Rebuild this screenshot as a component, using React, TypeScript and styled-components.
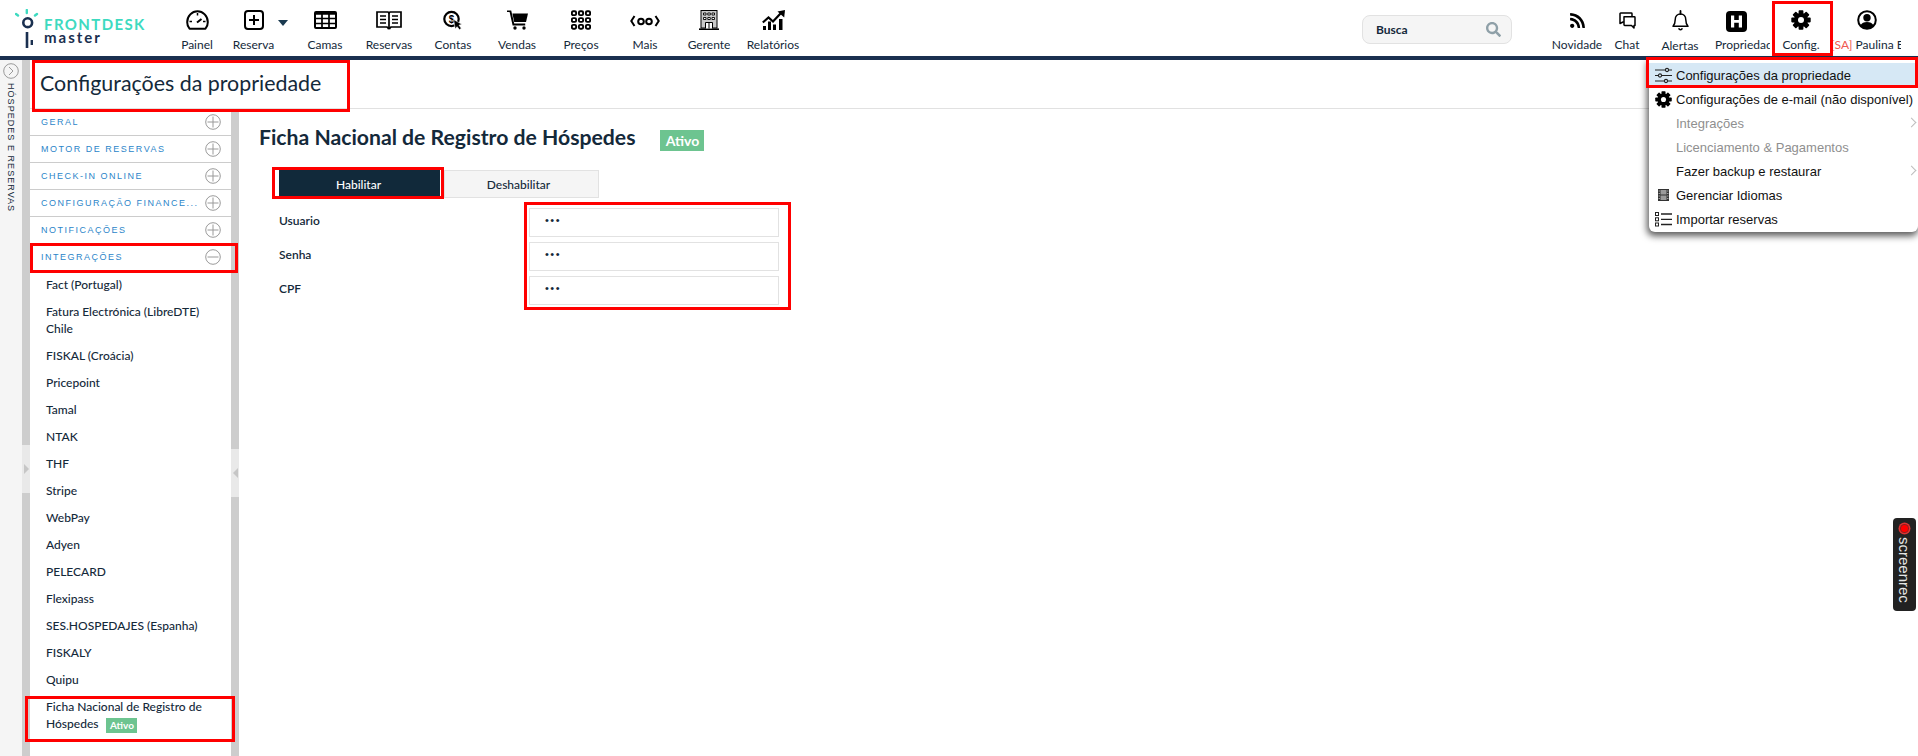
import React from "react";
import styled, { createGlobalStyle } from "styled-components";
import { FaRss, FaSearch } from "react-icons/fa";

const Global = createGlobalStyle`
  html, body { margin: 0; padding: 0; background: #fff; }
  body { font-family: "Lato", "Liberation Sans", sans-serif; color: #14293a; overflow: hidden; }
  * { box-sizing: border-box; }
`;

const Page = styled.div`
  position: relative;
  width: 1918px;
  height: 756px;
  overflow: hidden;
  display: flex;
  flex-direction: column;
`;

const Header = styled.header`
  height: 60px;
  flex: none;
  display: flex;
  align-items: flex-start;
  border-bottom: 4px solid #1a3050;
  background: #fff;
`;

const LogoBox = styled.div`
  width: 165px;
  flex: none;
  height: 56px;
  padding: 9px 0 0 15px;
`;

const NavRow = styled.nav`
  display: flex;
  flex: none;
`;

const NavItem = styled.div<{ $w?: number; $pr?: number }>`
  width: ${(p) => p.$w ?? 64}px;
  height: 56px;
  flex: none;
  padding-right: ${(p) => p.$pr ?? 0}px;
  display: flex;
  flex-direction: column;
  align-items: center;
  position: relative;
  overflow: hidden;
`;

const ClippedItem = styled(NavItem)`
  align-items: flex-start;
  padding-left: 7px;
`;

const IconSlot = styled.div<{ $pb?: number; $pr?: number }>`
  height: 37px;
  width: 100%;
  flex: none;
  display: flex;
  align-items: center;
  justify-content: center;
  color: #000;
  padding-top: ${(p) => 3 - (p.$pb ?? 0)}px;
  padding-right: ${(p) => p.$pr ?? 0}px;
`;

const NavLabel = styled.span<{ $dy?: number }>`
  font-size: 12px;
  line-height: 15px;
  white-space: nowrap;
  color: #14293a;
  margin-top: ${(p) => p.$dy ?? 0}px;
`;

const Caret = styled.span`
  position: absolute;
  left: 49px;
  top: 20px;
  width: 0;
  height: 0;
  border-left: 5px solid transparent;
  border-right: 5px solid transparent;
  border-top: 6px solid #1a3a50;
`;

const Spacer = styled.div`
  flex: 1;
`;

const SearchBox = styled.div`
  width: 150px;
  height: 29px;
  margin-top: 15px;
  margin-right: 40px;
  flex: none;
  display: flex;
  align-items: center;
  justify-content: space-between;
  padding: 0 10px 0 13px;
  background: #f5f5f5;
  border: 1px solid #e2e2e2;
  border-radius: 8px;
  font-size: 12px;
  font-weight: 700;
  color: #14293a;
  svg { color: #8fa0a8; }
`;

const UserLabel = styled.span`
  display: block;
  font-size: 12px;
  line-height: 15px;
  white-space: nowrap;
  color: #14293a;
  width: 68px;
  overflow: hidden;
  text-indent: -2px;
`;

const Red = styled.span`
  color: #f0584f;
`;

const RightNav = styled.div`
  display: flex;
  flex: none;
  padding-right: 16px;
`;

const Body = styled.div`
  flex: 1;
  display: flex;
  min-height: 0;
`;

const Rail = styled.div`
  width: 22px;
  flex: none;
  background: #f5f5f5;
  display: flex;
  flex-direction: column;
  align-items: center;
  padding-top: 3px;
`;

const RailText = styled.span`
  writing-mode: vertical-rl;
  font-family: "Liberation Sans", sans-serif;
  font-size: 9px;
  letter-spacing: 1.05px;
  margin-top: 4px;
  color: #14293a;
  white-space: nowrap;
`;

const Splitter = styled.div`
  width: 8px;
  flex: none;
  background: #cdcdcd;
  position: relative;
`;

const SplitTab = styled.div<{ $top: number; $left?: boolean }>`
  position: absolute;
  left: 0;
  top: ${(p) => p.$top}px;
  width: 8px;
  height: 48px;
  background: #e9e9e9;
  display: flex;
  align-items: center;
  justify-content: center;
  &::after {
    content: "";
    border-top: 5px solid transparent;
    border-bottom: 5px solid transparent;
    ${(p) => (p.$left ? "border-right: 5px solid #c6c6c6;" : "border-left: 5px solid #c6c6c6;")}
  }
`;

const Workspace = styled.div`
  flex: 1;
  display: flex;
  flex-direction: column;
  min-width: 0;
`;

const TitleBar = styled.div`
  height: 49px;
  flex: none;
  padding-left: 10px;
  display: flex;
  align-items: center;
  border-bottom: 1px solid #e1e1e1;
`;

const PageTitle = styled.h1`
  margin: 0;
  font-size: 21.4px;
  font-weight: 400;
  color: #14293a;
  padding-bottom: 2px;
`;

const Columns = styled.div`
  flex: 1;
  display: flex;
  min-height: 0;
`;

const Sidebar = styled.aside`
  width: 201px;
  flex: none;
  background: #fff;
`;

const SectionRow = styled.div`
  height: 27px;
  display: flex;
  align-items: center;
  justify-content: space-between;
  padding: 0 10px 0 11px;
  border-bottom: 1px solid #ccc;
`;

const SectionTitle = styled.span`
  font-family: "Liberation Sans", sans-serif;
  font-size: 9px;
  letter-spacing: 1.5px;
  color: #2b85c9;
  white-space: nowrap;
`;

const SubItem = styled.div`
  padding: 5px 18px 5px 16px;
  font-size: 12px;
  font-weight: 500;
  line-height: 17px;
  color: #14293a;
`;

const MiniBadge = styled.span`
  display: inline-block;
  margin-left: 8px;
  padding: 0 3.5px;
  height: 15px;
  line-height: 15px;
  font-size: 10px;
  font-weight: 700;
  color: #fff;
  background: #6dc490;
  vertical-align: -1px;
`;

const Main = styled.main`
  flex: 1;
  min-width: 0;
  padding: 14px 0 0 20px;
`;

const HeadingRow = styled.div`
  display: flex;
  align-items: center;
  height: 27px;
`;

const Heading = styled.h2`
  margin: 0;
  font-size: 21.2px;
  font-weight: 700;
  color: #14293a;
  white-space: nowrap;
`;

const Badge = styled.span`
  margin-left: 25px;
  margin-top: 8px;
  width: 44px;
  height: 21px;
  flex: none;
  display: flex;
  align-items: center;
  justify-content: center;
  font-size: 14px;
  font-weight: 700;
  color: #fff;
  background: #6dc490;
`;

const Toggle = styled.div`
  display: flex;
  margin: 20px 0 0 20px;
  height: 28px;
`;

const ToggleButton = styled.div<{ $on?: boolean }>`
  width: ${(p) => (p.$on ? 161 : 155)}px;
  margin-right: ${(p) => (p.$on ? 4 : 0)}px;
  padding-right: ${(p) => (p.$on ? 2 : 6)}px;
  display: flex;
  align-items: center;
  justify-content: center;
  font-size: 12px;
  color: ${(p) => (p.$on ? "#fff" : "#14293a")};
  background: ${(p) => (p.$on ? "#11293a" : "#f5f5f5")};
  border: 1px solid ${(p) => (p.$on ? "#11293a" : "#e2e2e2")};
  font-weight: 500;
`;

const Form = styled.div`
  display: grid;
  grid-template-columns: 250px 250px;
  row-gap: 5px;
  margin: 10px 0 0 20px;
`;

const FieldLabel = styled.label`
  font-size: 12px;
  font-weight: 600;
  color: #14293a;
  padding-top: 5px;
`;

const FieldBox = styled.div`
  height: 29px;
  border: 1px solid #e2e2e2;
  padding-left: 15px;
  font-family: "Liberation Sans", sans-serif;
  font-size: 11px;
  letter-spacing: 1.5px;
  line-height: 22px;
  color: #14293a;
`;

const Menu = styled.div`
  position: absolute;
  left: 1649px;
  top: 60px;
  width: 269px;
  height: 172px;
  padding-top: 3px;
  background: #fff;
  border-radius: 0 0 6px 6px;
  box-shadow: -1px 3px 7px 1px rgba(0, 0, 0, 0.65);
  font-family: "Liberation Sans", sans-serif;
`;

const MenuRow = styled.div<{ $active?: boolean; $muted?: boolean }>`
  height: 24px;
  display: flex;
  align-items: center;
  padding-left: 27px;
  position: relative;
  font-size: 13px;
  white-space: nowrap;
  background: ${(p) => (p.$active ? "#d6e8f5" : "transparent")};
  color: ${(p) => (p.$muted ? "#8f8f8f" : "#111")};
`;

const MenuIcon = styled.span`
  position: absolute;
  left: 5px;
  top: 3px;
  width: 18px;
  height: 18px;
  display: flex;
  align-items: center;
  justify-content: center;
  color: #111;
`;

const MenuChevron = styled.span`
  position: absolute;
  right: 3px;
  top: 8px;
  width: 7px;
  height: 7px;
  border-top: 1px solid #bdbdbd;
  border-right: 1px solid #bdbdbd;
  transform: rotate(45deg);
`;

const Annotation = styled.div<{ $x: number; $y: number; $w: number; $h: number }>`
  position: absolute;
  left: ${(p) => p.$x}px;
  top: ${(p) => p.$y}px;
  width: ${(p) => p.$w}px;
  height: ${(p) => p.$h}px;
  border: 3px solid #ff0000;
  pointer-events: none;
`;

const ScreenRec = styled.div`
  position: absolute;
  left: 1893px;
  top: 518px;
  width: 23px;
  height: 93px;
  border-radius: 4px;
  background: #222;
  display: flex;
  flex-direction: column;
  align-items: center;
  padding-top: 7px;
`;

const RecDot = styled.span`
  width: 7px;
  height: 7px;
  border-radius: 50%;
  background: #ff0000;
  box-shadow: 0 0 0 1px #8a1f1f, 0 0 0 2.5px #d33;
  flex: none;
`;

const RecText = styled.span`
  writing-mode: vertical-rl;
  margin-top: 5px;
  font-family: "Liberation Sans", sans-serif;
  font-size: 15px;
  line-height: 15px;
  color: #e6e6e6;
`;

const CircleBtn = styled.svg`
  flex: none;
  display: block;
`;

const RoundToggle = ({ minus }: { minus?: boolean }) => (
  <CircleBtn width="16" height="16" viewBox="0 0 16 16" fill="none" stroke="#9a9a9a" strokeWidth="1">
    <circle cx="8" cy="8" r="7.3" />
    <path d="M2.500 8h11" />
    {!minus && <path d="M8 2.500v11" />}
  </CircleBtn>
);

const Logo = () => (
  <svg width="135" height="40" viewBox="0 0 135 40" fill="none">
    <circle cx="12.700" cy="13.700" r="4.400" stroke="#1a3050" strokeWidth="2.600" />
    <path d="M12 23v16" stroke="#1a3050" strokeWidth="2.600" />
    <path d="M16.800 31v5" stroke="#1a3050" strokeWidth="2.400" />
    <path d="M1 5l2 1.500M11.800 1v3M22 5l-2 1.500" stroke="#3ddac0" strokeWidth="2.400" strokeLinecap="round" />
    <text x="29" y="21" fontFamily="Lato, sans-serif" fontSize="15" fontWeight="700" letterSpacing="1.400" fill="#3ddac0">FRONTDESK</text>
    <text x="29" y="34" fontFamily="Lato, sans-serif" fontSize="15" fontWeight="700" letterSpacing="2" fill="#1a3050">master</text>
  </svg>
);

const Gauge = () => (
  <svg width="23" height="20" viewBox="0 0 23 20" fill="none" stroke="#000" strokeWidth="2">
    <path d="M3.500 18.700C2 17 1.200 14.800 1.200 12.200 1.200 6 6 1.200 11.500 1.200S21.800 6 21.800 12.200c0 2.600-.8 4.800-2.300 6.500z" strokeLinejoin="round" />
    <path d="M11 12.500l4.500-3.500" strokeWidth="2" />
    <path d="M11.500 3v2.500M3.500 11.500H6M17 11.500h2.500" strokeWidth="1.500" />
  </svg>
);

const PlusBox = () => (
  <svg width="20" height="20" viewBox="0 0 20 20" fill="none" stroke="#000" strokeWidth="2">
    <rect x="1" y="1" width="18" height="18" rx="3" />
    <path d="M10 5v10M5 10h10" />
  </svg>
);

const Table = () => (
  <svg width="23" height="18" viewBox="0 0 23 18" fill="none" stroke="#000">
    <rect x="1" y="1" width="21" height="16" rx="1" strokeWidth="2" />
    <path d="M1 2.500h21" strokeWidth="2.500" />
    <path d="M1 7.500h21M1 12.500h21M8 2v15M15 2v15" strokeWidth="1.700" />
  </svg>
);

const Book = () => (
  <svg width="26" height="19" viewBox="0 0 26 19" fill="none" stroke="#000" strokeWidth="1.700">
    <path d="M1 1h11l1 1 1-1h11v15H15l-2 1.500L11 16H1z" />
    <path d="M13 2v14" />
    <path d="M4 5h6M4 8.500h6M4 12h6M16 5h6M16 8.500h6M16 12h6" strokeWidth="1.400" />
    <path d="M11.500 17.500h3" strokeWidth="1.500" />
  </svg>
);

const Coin = () => (
  <svg width="20" height="20" viewBox="0 0 20 20" fill="none">
    <circle cx="8.500" cy="9" r="7.200" stroke="#000" strokeWidth="2.200" />
    <text x="8.500" y="12.700" textAnchor="middle" fontFamily="Liberation Sans" fontSize="10" fontWeight="700" fill="#000">$</text>
    <path d="M10.500 9.500l8.500 4.800-3 .9 2.300 3-1.900 1.500-2.300-3-1.800 2.400z" fill="#000" stroke="#fff" strokeWidth="0.600" />
  </svg>
);

const Cart = () => (
  <svg width="21" height="20" viewBox="0 0 21 20" fill="#000">
    <path d="M0 .5h4.200l3 13h11v2H5.600l-3-13.500H0z" />
    <path d="M5.400 3.500H21l-2 8.500H7.200z" />
    <circle cx="8" cy="18" r="1.700" />
    <circle cx="17" cy="18" r="1.700" />
  </svg>
);

const Dots = () => (
  <svg width="20" height="20" viewBox="0 0 20 20" fill="none" stroke="#000" strokeWidth="1.900">
    {[3.200, 10, 16.800].flatMap((y) =>
      [3, 10, 17].map((x) => <rect key={`${x}-${y}`} x={x - 2.100} y={y - 1.900} width="4.200" height="3.800" rx="1.200" />)
    )}
  </svg>
);

const More = () => (
  <svg width="30" height="12" viewBox="0 0 30 12" fill="none" stroke="#000" strokeWidth="2">
    <path d="M4.500 1L1.300 6l3.200 5M25.500 1l3.200 5-3.200 5" />
    <circle cx="11" cy="6.500" r="2.800" />
    <circle cx="19" cy="6.500" r="2.800" />
  </svg>
);

const Building = () => (
  <svg width="20" height="20" viewBox="0 0 20 20" fill="none" stroke="#000">
    <rect x="2" y="0.500" width="16" height="17.500" fill="#c9c9c9" strokeWidth="1" />
    <path d="M0 19.200h20" strokeWidth="1.600" />
    <path d="M4.500 3h2.500v2H4.500zM8.800 3h2.500v2H8.800zM13 3h2.500v2H13zM4.500 7.500h2.500v2H4.500zM8.800 7.500h2.500v2H8.800zM13 7.500h2.500v2H13z" fill="#fff" strokeWidth="0.900" />
    <path d="M6.500 18.500V12.500h7v6M10 12.500v6" fill="#fff" strokeWidth="1" />
  </svg>
);

const ChartUp = () => (
  <svg width="23" height="20" viewBox="0 0 23 20" fill="#000">
    <path d="M.8 12.500l5.700-5 4.500 4 8-8.500" fill="none" stroke="#000" strokeWidth="2.200" />
    <path d="M15.500 1.500L23 0l-.8 7.500z" />
    <path d="M1 16h3v4H1zM6 11.500h3V20H6zM11 14.500h3V20h-3zM17 9h3.500v11H17z" />
  </svg>
);

const Chat = () => (
  <svg width="17" height="17" viewBox="0 0 17 17" fill="none" stroke="#000" strokeWidth="1.500">
    <path d="M1.700 1h10.600c.4 0 .7.300.7.700V10H4L1 11.500V1.700c0-.4.300-.7.700-.7z" strokeLinejoin="round" />
    <path d="M5 4.800h10.300c.4 0 .7.300.7.700v8h-1v2.500l-2.500-2.500H5.700c-.4 0-.7-.3-.7-.7z" fill="#fff" strokeLinejoin="round" />
  </svg>
);

const Bell = () => (
  <svg width="17" height="21" viewBox="0 0 17 21" fill="none" stroke="#000" strokeWidth="1.500">
    <path d="M1 16.200c1.500-1.500 2.200-3.200 2.200-6.500 0-3.300 2.200-5.700 5.300-5.700s5.300 2.400 5.300 5.700c0 3.300.7 5 2.200 6.500z" strokeLinejoin="round" />
    <path d="M8.500 4V1" strokeWidth="1.800" strokeLinecap="round" />
    <path d="M6.700 18.200c.3 1 1 1.600 1.800 1.600s1.500-.6 1.800-1.600" />
  </svg>
);

const HBox = () => (
  <svg width="21" height="21" viewBox="0 0 21 21">
    <rect width="21" height="21" rx="4" fill="#000" />
    <path d="M5 4.500h3.200v4.500h4.600V4.500H16v12h-3.200v-4.800H8.200v4.800H5z" fill="#fff" />
  </svg>
);

const Gear = ({ size }: { size: number }) => (
  <svg width={size} height={size} viewBox="0 0 20 20" fill="#000">
    <circle cx="10" cy="10" r="7" />
    {[0, 45, 90, 135].map((a) => (
      <rect key={a} x="7.600" y="0.300" width="4.800" height="19.400" rx="0.800" transform={`rotate(${a} 10 10)`} />
    ))}
    <circle cx="10" cy="10" r="3" fill="#fff" />
  </svg>
);

const UserCircle = () => (
  <svg width="20" height="20" viewBox="0 0 20 20" fill="none">
    <circle cx="10" cy="10" r="8.800" stroke="#000" strokeWidth="2" />
    <circle cx="10" cy="7.800" r="3.700" fill="#000" />
    <path d="M3.300 15.800c1.300-2.800 3.700-3.800 6.700-3.800s5.400 1 6.700 3.800a8.800 8.800 0 0 1-13.400 0z" fill="#000" />
  </svg>
);

const Sliders = () => (
  <svg width="17" height="17" viewBox="0 0 17 17" fill="none" stroke="#222" strokeWidth="1.100">
    <path d="M0 3h10.500M13.500 3H17M0 8.500h3.500M6.500 8.500H17M0 14h9.500M12.500 14H17" />
    <circle cx="12" cy="3" r="1.600" />
    <circle cx="5" cy="8.500" r="1.600" />
    <circle cx="11" cy="14" r="1.600" />
  </svg>
);

const Film = () => (
  <svg width="11" height="12" viewBox="0 0 11 12">
    <rect width="11" height="12" fill="#333" />
    <path d="M2.500 1h6v4.500h-6zM2.500 6.500h6V11h-6z" fill="#9a9a9a" />
    <path d="M.7 1.500h1v1h-1zM.7 4h1v1h-1zM.7 6.500h1v1h-1zM.7 9h1v1h-1zM9.300 1.500h1v1h-1zM9.300 4h1v1h-1zM9.300 6.500h1v1h-1zM9.300 9h1v1h-1z" fill="#ccc" />
  </svg>
);

const ListIcon = () => (
  <svg width="17" height="15" viewBox="0 0 17 15" fill="none" stroke="#222" strokeWidth="1">
    <rect x="0.500" y="0.500" width="3" height="3" />
    <rect x="0.500" y="5.800" width="3" height="3" />
    <rect x="0.500" y="11" width="3" height="3" />
    <path d="M6 2h11M6 7.300h11M6 12.500h11" strokeWidth="1.300" />
  </svg>
);

const RailToggle = () => (
  <svg width="16" height="16" viewBox="0 0 16 16" fill="none" stroke="#9a9a9a" strokeWidth="1">
    <circle cx="8" cy="8" r="7.300" />
    <path d="M6 4l4 4-4 4" />
  </svg>
);

const navItems: { label: string; icon: React.ReactNode; lift?: number }[] = [
  { label: "Camas", icon: <Table />, lift: 0 },
  { label: "Reservas", icon: <Book />, lift: 0 },
  { label: "Contas", icon: <Coin /> },
  { label: "Vendas", icon: <Cart /> },
  { label: "Preços", icon: <Dots /> },
  { label: "Mais", icon: <More />, lift: -2 },
  { label: "Gerente", icon: <Building /> },
  { label: "Relatórios", icon: <ChartUp /> },
];

const sections = ["GERAL", "MOTOR DE RESERVAS", "CHECK-IN ONLINE", "CONFIGURAÇÃO FINANCE...", "NOTIFICAÇÕES"];
const subs = [
  "Fact (Portugal)",
  "Fatura Electrónica (LibreDTE) Chile",
  "FISKAL (Croácia)",
  "Pricepoint",
  "Tamal",
  "NTAK",
  "THF",
  "Stripe",
  "WebPay",
  "Adyen",
  "PELECARD",
  "Flexipass",
  "SES.HOSPEDAJES (Espanha)",
  "FISKALY",
  "Quipu",
];

export default function App() {
  return (
    <Page>
      <Global />
      <Header>
        <LogoBox>
          <Logo />
        </LogoBox>
        <NavRow>
          <NavItem>
            <IconSlot><Gauge /></IconSlot>
            <NavLabel>Painel</NavLabel>
          </NavItem>
          <NavItem $pr={15}>
            <IconSlot><PlusBox /></IconSlot>
            <NavLabel>Reserva</NavLabel>
            <Caret />
          </NavItem>
          {navItems.map((n) => (
            <NavItem key={n.label}>
              <IconSlot $pb={n.lift}>{n.icon}</IconSlot>
              <NavLabel>{n.label}</NavLabel>
            </NavItem>
          ))}
        </NavRow>
        <Spacer />
        <SearchBox>
          Busca
          <FaSearch size={15} />
        </SearchBox>
        <RightNav>
          <NavItem $w={50}>
            <IconSlot><FaRss size={17} /></IconSlot>
            <NavLabel>Novidade</NavLabel>
          </NavItem>
          <NavItem $w={50}>
            <IconSlot><Chat /></IconSlot>
            <NavLabel>Chat</NavLabel>
          </NavItem>
          <NavItem $w={56}>
            <IconSlot><Bell /></IconSlot>
            <NavLabel $dy={1}>Alertas</NavLabel>
          </NavItem>
          <ClippedItem $w={62}>
            <IconSlot $pb={-2} $pr={13}><HBox /></IconSlot>
            <NavLabel>Propriedade</NavLabel>
          </ClippedItem>
          <NavItem $w={62}>
            <IconSlot><Gear size={20} /></IconSlot>
            <NavLabel>Config.</NavLabel>
          </NavItem>
          <NavItem $w={70}>
            <IconSlot><UserCircle /></IconSlot>
            <UserLabel><Red>[SA]</Red> Paulina E</UserLabel>
          </NavItem>
        </RightNav>
      </Header>
      <Body>
        <Rail>
          <RailToggle />
          <RailText>HÓSPEDES E RESERVAS</RailText>
        </Rail>
        <Splitter><SplitTab $top={385} /></Splitter>
        <Workspace>
          <TitleBar>
            <PageTitle>Configurações da propriedade</PageTitle>
          </TitleBar>
          <Columns>
            <Sidebar>
              {sections.map((s) => (
                <SectionRow key={s}>
                  <SectionTitle>{s}</SectionTitle>
                  <RoundToggle />
                </SectionRow>
              ))}
              <SectionRow>
                <SectionTitle>INTEGRAÇÕES</SectionTitle>
                <RoundToggle minus />
              </SectionRow>
              {subs.map((s) => (
                <SubItem key={s}>{s}</SubItem>
              ))}
              <SubItem>
                Ficha Nacional de Registro de Hóspedes
                <MiniBadge>Ativo</MiniBadge>
              </SubItem>
            </Sidebar>
            <Splitter><SplitTab $top={340} $left /></Splitter>
            <Main>
              <HeadingRow>
                <Heading>Ficha Nacional de Registro de Hóspedes</Heading>
                <Badge>Ativo</Badge>
              </HeadingRow>
              <Toggle>
                <ToggleButton $on>Habilitar</ToggleButton>
                <ToggleButton>Deshabilitar</ToggleButton>
              </Toggle>
              <Form>
                <FieldLabel>Usuario</FieldLabel>
                <FieldBox>•••</FieldBox>
                <FieldLabel>Senha</FieldLabel>
                <FieldBox>•••</FieldBox>
                <FieldLabel>CPF</FieldLabel>
                <FieldBox>•••</FieldBox>
              </Form>
            </Main>
          </Columns>
        </Workspace>
      </Body>

      <Menu>
        <MenuRow $active>
          <MenuIcon><Sliders /></MenuIcon>
          Configurações da propriedade
        </MenuRow>
        <MenuRow>
          <MenuIcon><Gear size={17} /></MenuIcon>
          Configurações de e-mail (não disponível)
        </MenuRow>
        <MenuRow $muted>
          Integrações
          <MenuChevron />
        </MenuRow>
        <MenuRow $muted>Licenciamento &amp; Pagamentos</MenuRow>
        <MenuRow>
          Fazer backup e restaurar
          <MenuChevron />
        </MenuRow>
        <MenuRow>
          <MenuIcon><Film /></MenuIcon>
          Gerenciar Idiomas
        </MenuRow>
        <MenuRow>
          <MenuIcon><ListIcon /></MenuIcon>
          Importar reservas
        </MenuRow>
      </Menu>

      <Annotation $x={32} $y={60} $w={318} $h={52} />
      <Annotation $x={30} $y={243} $w={208} $h={30} />
      <Annotation $x={25} $y={696} $w={210} $h={46} />
      <Annotation $x={272} $y={167} $w={172} $h={32} />
      <Annotation $x={524} $y={202} $w={267} $h={108} />
      <Annotation $x={1772} $y={1} $w={61} $h={55} />
      <Annotation $x={1646} $y={57} $w={272} $h={31} />

      <ScreenRec>
        <RecDot />
        <RecText>screenrec</RecText>
      </ScreenRec>
    </Page>
  );
}
